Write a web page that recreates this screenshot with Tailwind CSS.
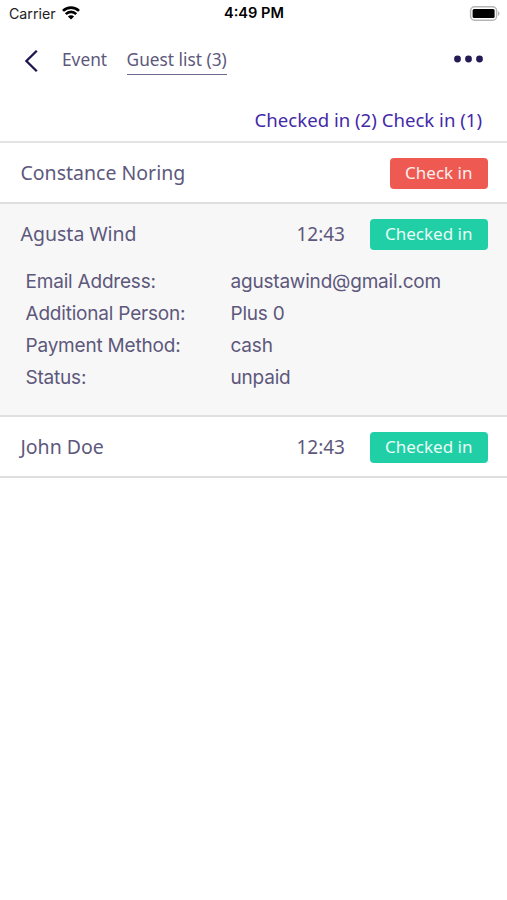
<!DOCTYPE html>
<html lang="en">
<head>
  <meta charset="utf-8">
  <meta name="viewport" content="width=device-width, initial-scale=1">
  <title>Guest list</title>
  <script src="https://cdn.jsdelivr.net/npm/@tailwindcss/browser@4"></script>
</head>
<body class="bg-white min-h-screen font-['Noto_Sans',sans-serif] text-[#5d587c]">
  <!-- Status bar -->
  <div class="h-[27px] grid grid-cols-3 items-center pl-[8px] pr-[7px] font-['Inter',sans-serif] text-black">
    <div class="flex items-center gap-[6px] pl-px text-[14.2px] text-[#222]">
      <span>Carrier</span>
      <svg class="w-[18px] h-[14px] -mt-px" viewBox="0 0 18 14" fill="none" stroke="#000" stroke-width="2.7">
        <path d="M1 4.9a11.4 11.4 0 0 1 16 0"/>
        <path d="M3.8 8.1a7.4 7.4 0 0 1 10.4 0"/>
        <path d="M9 13.6 5.9 10.6a4.4 4.4 0 0 1 6.2 0z" fill="#000" stroke="none"/>
      </svg>
    </div>
    <div class="text-center text-[14.6px] font-semibold pt-px">4:49 PM</div>
    <svg class="justify-self-end w-[31px] h-[15px] -mt-px" viewBox="0 0 31 15">
      <rect x="1.6" y=".8" width="26" height="13.4" rx="4" fill="#fff" stroke="#b5b5b5" stroke-width="1.5"/>
      <rect x="3.6" y="3" width="22" height="9" rx="1.5" fill="#000"/>
      <path d="M29 5.2c2 .6 2 4 0 4.6z" fill="#b5b5b5"/>
    </svg>
  </div>

  <!-- Navigation -->
  <nav class="h-[69px] flex items-start pl-[24px] pr-[24px] pt-[19px] text-[17.3px] leading-[28px]">
    <svg class="w-[14px] h-[24px] mt-[3px] mr-[24px]" viewBox="0 0 14 24" fill="none" stroke="#1d1450" stroke-width="2.3">
      <path d="M12.8 1.8 2.4 12l10.4 10.2"/>
    </svg>
    <a class="mr-[19.5px]">Event</a>
    <a class="border-b border-[#6d688c] h-[29px]">Guest list (3)</a>
    <svg class="ml-auto w-[29px] h-[8px] mt-[9px]" viewBox="0 0 29 8" fill="#231a56">
      <circle cx="3.5" cy="4" r="3.4"/><circle cx="14.5" cy="4" r="3.4"/><circle cx="25.5" cy="4" r="3.4"/>
    </svg>
  </nav>

  <div class="h-[47px] pr-[25px] pt-[11px] text-right text-[18.6px] leading-[25px] text-[#4429a8] border-b-2 border-[#e2e3e5]">Checked in (2) Check in (1)</div>

  <!-- Guests -->
  <ul class="text-[19.5px] leading-[30px]">
    <li class="h-[61px] border-b-2 border-[#dedfe0] pt-[15px] pl-[20.5px] pr-[19.5px] flex">
      <span>Constance Noring</span>
      <button class="ml-auto w-[97.5px] h-[30.5px] pb-px rounded-[4px] bg-[#ee5a52] text-[#fdeeed] text-[17px] leading-[29px]">Check in</button>
    </li>
    <li class="h-[213px] border-b-2 border-[#dedfe0] bg-[#f7f7f7] pt-[15px]">
      <div class="h-[31px] pl-[20.5px] pr-[19.5px] flex">
        <span>Agusta Wind</span>
        <span class="ml-auto mr-[25px] text-[19px]">12:43</span>
        <button class="w-[117.5px] h-[30.5px] pb-px rounded-[4px] bg-[#20cfa6] text-[#e9fbf6] text-[17px] leading-[29px]">Checked in</button>
      </div>
      <dl class="mt-[16px] pl-[25.5px] grid grid-cols-[205px_1fr] font-['Inter',sans-serif] text-[19px] leading-[32px] tracking-[-0.2px]">
        <dt>Email Address:</dt><dd>agustawind@gmail.com</dd>
        <dt>Additional Person:</dt><dd>Plus 0</dd>
        <dt>Payment Method:</dt><dd>cash</dd>
        <dt>Status:</dt><dd>unpaid</dd>
      </dl>
    </li>
    <li class="h-[61px] border-b-2 border-[#dedfe0] pt-[15px] pl-[20.5px] pr-[19.5px] flex">
      <span>John Doe</span>
      <span class="ml-auto mr-[25px] text-[19px]">12:43</span>
      <button class="w-[117.5px] h-[30.5px] pb-px rounded-[4px] bg-[#20cfa6] text-[#e9fbf6] text-[17px] leading-[29px]">Checked in</button>
    </li>
  </ul>
</body>
</html>
